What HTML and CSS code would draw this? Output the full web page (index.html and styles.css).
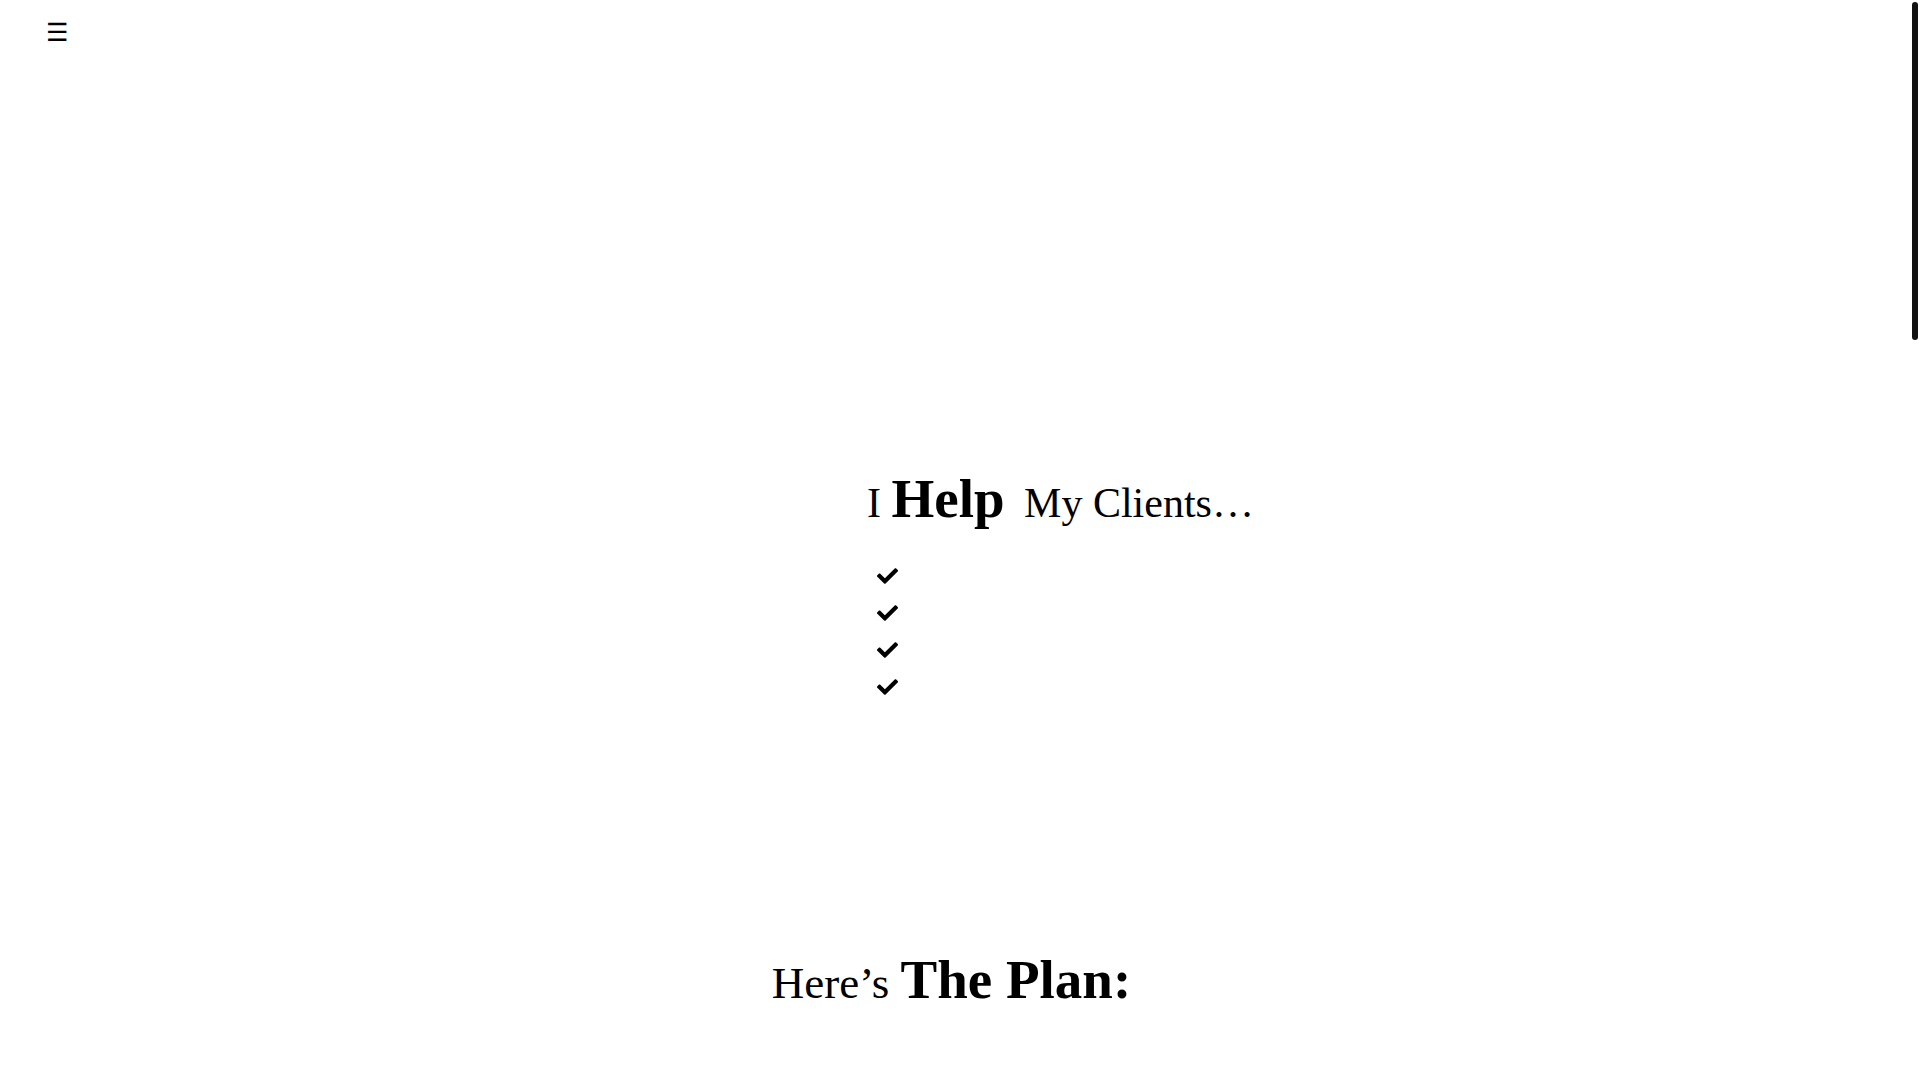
FILE: index.html
```html
<!DOCTYPE html>
<html lang="en">
<head>
<meta charset="utf-8">
<title>I Help My Clients</title>
<link rel="stylesheet" href="styles.css">
</head>
<body>
<header class="topbar">
  <button class="menu-toggle" type="button" aria-label="Menu">☰</button>
</header>
<div class="scroll-thumb" aria-hidden="true"></div>
<main>
  <section class="help">
    <h2 class="help-title">I <strong>Help</strong> My Clients…</h2>
    <ul class="checklist">
      <li><svg class="check" viewBox="0 64 512 384" aria-hidden="true"><path d="M173.898 439.404l-166.4-166.4c-9.997-9.997-9.997-26.206 0-36.204l36.203-36.204c9.997-9.998 26.207-9.998 36.204 0L192 312.69 432.095 72.596c9.997-9.997 26.207-9.997 36.204 0l36.203 36.204c9.997 9.997 9.997 26.206 0 36.204l-294.4 294.401c-9.998 9.997-26.207 9.997-36.204-.001z"/></svg><span class="item-text"></span></li>
      <li><svg class="check" viewBox="0 64 512 384" aria-hidden="true"><path d="M173.898 439.404l-166.4-166.4c-9.997-9.997-9.997-26.206 0-36.204l36.203-36.204c9.997-9.998 26.207-9.998 36.204 0L192 312.69 432.095 72.596c9.997-9.997 26.207-9.997 36.204 0l36.203 36.204c9.997 9.997 9.997 26.206 0 36.204l-294.4 294.401c-9.998 9.997-26.207 9.997-36.204-.001z"/></svg><span class="item-text"></span></li>
      <li><svg class="check" viewBox="0 64 512 384" aria-hidden="true"><path d="M173.898 439.404l-166.4-166.4c-9.997-9.997-9.997-26.206 0-36.204l36.203-36.204c9.997-9.998 26.207-9.998 36.204 0L192 312.69 432.095 72.596c9.997-9.997 26.207-9.997 36.204 0l36.203 36.204c9.997 9.997 9.997 26.206 0 36.204l-294.4 294.401c-9.998 9.997-26.207 9.997-36.204-.001z"/></svg><span class="item-text"></span></li>
      <li><svg class="check" viewBox="0 64 512 384" aria-hidden="true"><path d="M173.898 439.404l-166.4-166.4c-9.997-9.997-9.997-26.206 0-36.204l36.203-36.204c9.997-9.998 26.207-9.998 36.204 0L192 312.69 432.095 72.596c9.997-9.997 26.207-9.997 36.204 0l36.203 36.204c9.997 9.997 9.997 26.206 0 36.204l-294.4 294.401c-9.998 9.997-26.207 9.997-36.204-.001z"/></svg><span class="item-text"></span></li>
    </ul>
  </section>
  <section class="plan">
    <h2 class="plan-title">Here’s <strong>The Plan:</strong></h2>
  </section>
</main>
</body>
</html>
```

FILE: styles.css
```css
html {
  background: #ffffff;
}

body {
  margin: 0;
  background: #ffffff;
  color: #000000;
  font-family: "Liberation Serif", "Times New Roman", serif;
}

.scroll-thumb {
  position: fixed;
  top: 2px;
  right: 2px;
  width: 6px;
  height: 338px;
  border-radius: 3px;
  background: #111111;
}

.topbar {
  height: 60px;
  padding: 0 0 0 46px;
  display: flex;
  align-items: flex-start;
}

.menu-toggle {
  margin-top: 17px;
  padding: 0;
  border: 0;
  background: transparent;
  color: #000000;
  font-family: "DejaVu Sans", sans-serif;
  font-size: 25px;
  line-height: 32px;
  cursor: pointer;
}

.help {
  padding: 406px 0 0 867px;
}

.help-title,
.plan-title {
  margin: 0;
  font-weight: 400;
  font-size: 42px;
  line-height: 66px;
}

.help-title strong,
.plan-title strong {
  font-weight: 700;
  font-size: 55px;
}

.help-title strong {
  margin-right: 9px;
}

.checklist {
  list-style: none;
  margin: 21px 0 0;
  padding: 0 0 0 10px;
}

.checklist li {
  height: 37px;
  display: flex;
  align-items: center;
}

.check {
  width: 21px;
  height: 16px;
  fill: #000000;
}

.plan {
  padding: 242px 0 2430px;
  text-align: center;
}

.plan-title {
  font-size: 45px;
  padding-right: 17px;
}
```
